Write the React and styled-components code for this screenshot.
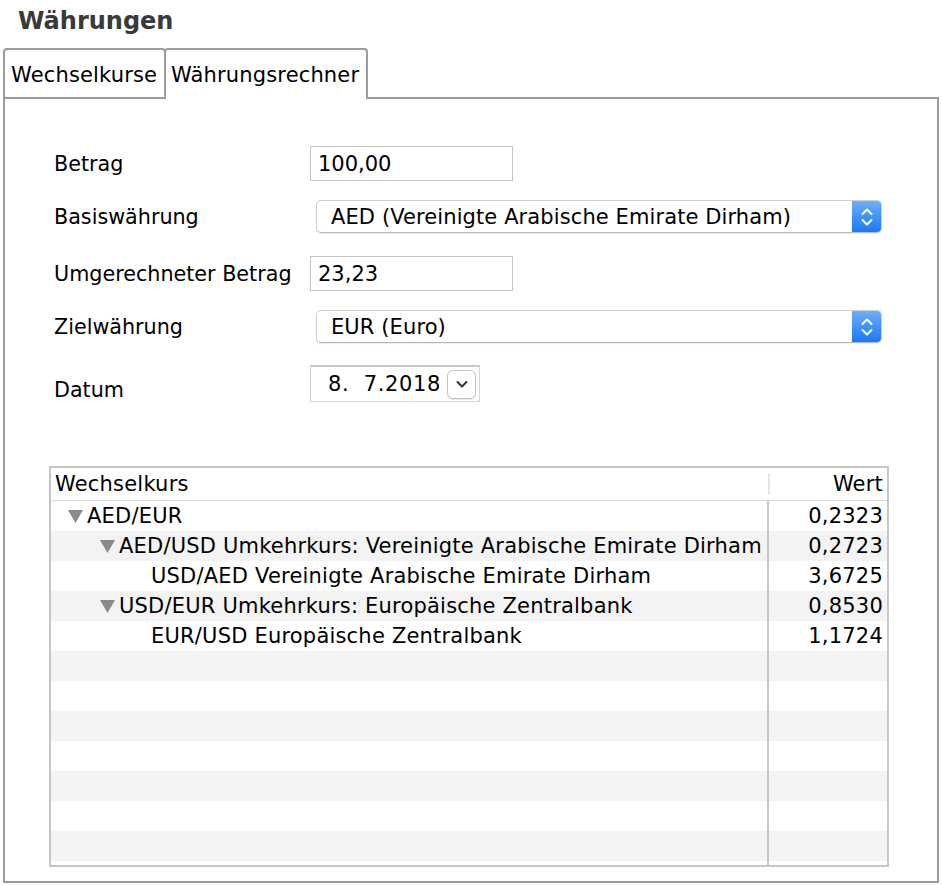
import React from "react";
import styled, { createGlobalStyle } from "styled-components";

const GlobalStyle = createGlobalStyle`
  body {
    margin: 0;
    background: #fff;
    font-family: "DejaVu Sans", "Liberation Sans", sans-serif;
    color: #000;
  }
`;

const Page = styled.div`
  width: 942px;
  box-sizing: border-box;
  padding: 0 3px;
`;

const Title = styled.h1`
  margin: 0;
  height: 48px;
  line-height: 42px;
  padding-left: 15px;
  font-size: 24px;
  font-weight: bold;
  color: #3a3a3a;
`;

const TabStrip = styled.div`
  display: flex;
  height: 51px;
`;

const Tab = styled.div`
  box-sizing: border-box;
  width: ${(p) => p.$width}px;
  margin-left: ${(p) => (p.$first ? 0 : -2)}px;
  height: 100%;
  border: 2px solid #9c9c9c;
  border-bottom: ${(p) => (p.$active ? "none" : "2px solid #9c9c9c")};
  border-radius: 4px 4px 0 0;
  display: flex;
  align-items: center;
  padding-left: ${(p) => (p.$first ? 6 : 5)}px;
  padding-top: ${(p) => (p.$active ? 0 : 3)}px;
  font-size: 21px;
  letter-spacing: 0.15px;
  background: #fff;
`;

const TabFiller = styled.div`
  flex: 1;
  border-bottom: 2px solid #9c9c9c;
`;

const Panel = styled.div`
  box-sizing: border-box;
  height: 784px;
  border: 2px solid #9c9c9c;
  border-top: none;
  padding: 47px 48px 13px 44px;
`;

const Form = styled.div`
  padding-left: 5px;
`;

const FormRow = styled.div`
  display: flex;
  align-items: center;
  height: ${(p) => p.$h}px;
  margin-top: ${(p) => p.$mt || 0}px;
`;

const Label = styled.div`
  width: 256px;
  font-size: 20.7px;
  margin-top: ${(p) => p.$drop || 0}px;
`;

const TextInput = styled.div`
  box-sizing: border-box;
  width: 203px;
  height: 100%;
  border: 1px solid #c4c4c4;
  padding-left: 7px;
  display: flex;
  align-items: center;
  font-size: 21px;
`;

const Select = styled.div`
  box-sizing: border-box;
  margin-left: 6px;
  width: 566px;
  height: 100%;
  border: 1px solid #cfcfcf;
  border-bottom-color: #b8b8b8;
  border-radius: 5px;
  display: flex;
  align-items: center;
  overflow: hidden;
  box-shadow: 0 1px 1px rgba(0, 0, 0, 0.08);
`;

const SelectText = styled.div`
  flex: 1;
  padding-left: 14px;
  font-size: 21px;
  letter-spacing: 0.1px;
`;

const SelectArrow = styled.div`
  width: 29px;
  height: 100%;
  background: linear-gradient(#6eaefa, #1a79f5);
  display: flex;
  align-items: center;
  justify-content: center;
`;

const DateBox = styled.div`
  box-sizing: border-box;
  width: 170px;
  height: 100%;
  border: 1px solid #d4d4d4;
  border-top: 2px solid #c8c8c8;
  display: flex;
  align-items: center;
  padding-left: 17px;
  font-size: 21px;
  letter-spacing: 0.6px;
  white-space: pre;
`;

const DateButton = styled.div`
  box-sizing: border-box;
  margin-left: auto;
  margin-right: 3px;
  width: 29px;
  height: 29px;
  border: 1px solid #c4c4c4;
  border-radius: 6px;
  display: flex;
  align-items: center;
  justify-content: center;
  box-shadow: 0 1px 1px rgba(0, 0, 0, 0.1);
`;

const Table = styled.div`
  box-sizing: border-box;
  margin-top: 64px;
  height: 401px;
  border: 2px solid #c6c6c6;
  overflow: hidden;
  font-size: 21px;
  letter-spacing: 0.2px;
`;

const HeaderRow = styled.div`
  display: flex;
  height: 32px;
  border-bottom: 1px solid #dadada;
`;

const HeaderName = styled.div`
  flex: 1;
  display: flex;
  align-items: center;
  padding-left: 4px;
  position: relative;
  &::after {
    content: "";
    position: absolute;
    right: -1px;
    top: 5px;
    bottom: 5px;
    width: 2px;
    background: #e6e6e6;
  }
`;

const HeaderValue = styled.div`
  width: 118px;
  display: flex;
  align-items: center;
  justify-content: flex-end;
  padding-right: 4px;
  box-sizing: border-box;
`;

const Body = styled.div`
  height: 364px;
  overflow: hidden;
`;

const Row = styled.div`
  display: flex;
  height: 30px;
  background: ${(p) => (p.$odd ? "#f3f3f3" : "#fff")};
`;

const NameCell = styled.div`
  flex: 1;
  display: flex;
  align-items: center;
  padding-left: ${(p) => 17 + p.$level * 32}px;
  border-right: 2px solid #c6c6c6;
  white-space: nowrap;
`;

const ValueCell = styled.div`
  box-sizing: border-box;
  width: 118px;
  display: flex;
  align-items: center;
  justify-content: flex-end;
  padding-right: 4px;
`;

const Disclosure = styled.span`
  display: flex;
  align-items: center;
  width: 15px;
  margin-right: 4px;
  height: 14px;
  flex-shrink: 0;
`;

const Chevrons = () => (
  <svg width="14" height="22" viewBox="0 0 14 22">
    <path d="M2.5 8 L7 3.5 L11.5 8" fill="none" stroke="#fff" strokeWidth="2" strokeLinecap="round" strokeLinejoin="round" />
    <path d="M2.5 14 L7 18.5 L11.5 14" fill="none" stroke="#fff" strokeWidth="2" strokeLinecap="round" strokeLinejoin="round" />
  </svg>
);

const ChevronDown = () => (
  <svg width="14" height="10" viewBox="0 0 14 10">
    <path d="M2.5 3 L7 7.5 L11.5 3" fill="none" stroke="#333" strokeWidth="2" strokeLinecap="round" strokeLinejoin="round" />
  </svg>
);

const Triangle = () => (
  <Disclosure>
    <svg width="15" height="13" viewBox="0 0 15 13">
      <path d="M0 0 L15 0 L7.5 13 Z" fill="#8a8a8a" />
    </svg>
  </Disclosure>
);

const rates = [
  { level: 0, open: true, name: "AED/EUR", value: "0,2323" },
  { level: 1, open: true, name: "AED/USD Umkehrkurs: Vereinigte Arabische Emirate Dirham", value: "0,2723" },
  { level: 2, name: "USD/AED Vereinigte Arabische Emirate Dirham", value: "3,6725" },
  { level: 1, open: true, name: "USD/EUR Umkehrkurs: Europäische Zentralbank", value: "0,8530" },
  { level: 2, name: "EUR/USD Europäische Zentralbank", value: "1,1724" },
];

export default function App() {
  const rows = Array.from({ length: 13 }, (_, i) => rates[i] || null);

  return (
    <Page>
      <GlobalStyle />
      <Title>Währungen</Title>
      <TabStrip>
        <Tab $first $width={163}>Wechselkurse</Tab>
        <Tab $active $width={204}>Währungsrechner</Tab>
        <TabFiller />
      </TabStrip>
      <Panel>
        <Form>
          <FormRow $h={35}>
            <Label>Betrag</Label>
            <TextInput>100,00</TextInput>
          </FormRow>
          <FormRow $h={33} $mt={19}>
            <Label>Basiswährung</Label>
            <Select>
              <SelectText>AED (Vereinigte Arabische Emirate Dirham)</SelectText>
              <SelectArrow>
                <Chevrons />
              </SelectArrow>
            </Select>
          </FormRow>
          <FormRow $h={35} $mt={23}>
            <Label>Umgerechneter Betrag</Label>
            <TextInput>23,23</TextInput>
          </FormRow>
          <FormRow $h={33} $mt={19}>
            <Label>Zielwährung</Label>
            <Select>
              <SelectText>EUR (Euro)</SelectText>
              <SelectArrow>
                <Chevrons />
              </SelectArrow>
            </Select>
          </FormRow>
          <FormRow $h={37} $mt={22}>
            <Label $drop={13}>Datum</Label>
            <DateBox>
              {"8.  7.2018"}
              <DateButton>
                <ChevronDown />
              </DateButton>
            </DateBox>
          </FormRow>
        </Form>

        <Table>
          <HeaderRow>
            <HeaderName>Wechselkurs</HeaderName>
            <HeaderValue>Wert</HeaderValue>
          </HeaderRow>
          <Body>
            {rows.map((r, i) => (
              <Row key={i} $odd={i % 2 === 1}>
                <NameCell $level={r ? r.level : 0}>
                  {r && (r.open ? <Triangle /> : <Disclosure />)}
                  {r && r.name}
                </NameCell>
                <ValueCell>{r && r.value}</ValueCell>
              </Row>
            ))}
          </Body>
        </Table>
      </Panel>
    </Page>
  );
}
